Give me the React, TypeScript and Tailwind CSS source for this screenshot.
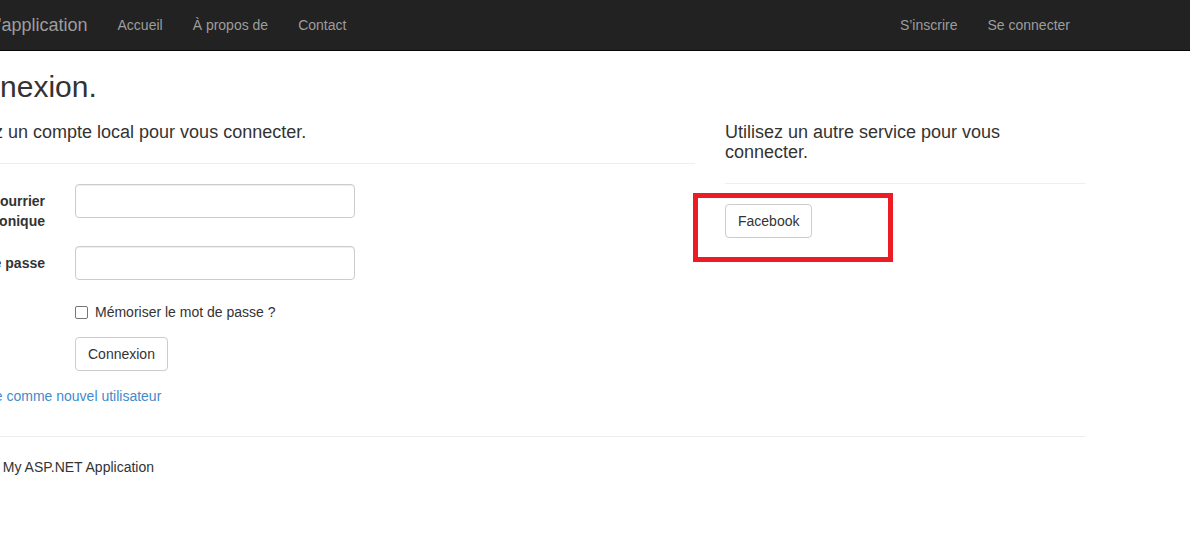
import React from "react";

function Hr() {
  return <hr className="my-[20px] border-0 border-t border-[#eeeeee]" />;
}

function Btn({ children }: { children: React.ReactNode }) {
  return (
    <button
      type="button"
      className="inline-block rounded-[4px] border border-[#cccccc] bg-white px-[12px] py-[6px] text-[14px] leading-[20px] text-[#333333]"
    >
      {children}
    </button>
  );
}

function Input() {
  return (
    <input
      className="block h-[34px] w-[280px] rounded-[4px] border border-[#cccccc] bg-white px-[12px] py-[6px] text-[14px] shadow-[inset_0_1px_1px_rgba(0,0,0,0.075)] outline-none"
    />
  );
}

export default function App() {
  return (
    <div
      className="relative h-[560px] w-[1190px] overflow-hidden bg-white text-[14px] leading-[20px] text-[#333333]"
      style={{ fontFamily: '"Liberation Sans", Arial, Helvetica, sans-serif' }}
    >
      {/* Navbar */}
      <div className="box-border h-[51px] border-b border-[#080808] bg-[#222222]">
        <div className="ml-[-55px] flex w-[1140px] text-[#9d9d9d]">
          <a className="py-[15px] pr-[15px] text-[18px] leading-[20px]">Nom d'application</a>
          <ul className="flex">
            <li className="px-[15px] py-[15px]">Accueil</li>
            <li className="px-[15px] py-[15px]">À propos de</li>
            <li className="px-[15px] py-[15px]">Contact</li>
          </ul>
          <ul className="ml-auto flex">
            <li className="px-[15px] py-[15px]">S’inscrire</li>
            <li className="px-[15px] py-[15px]">Se connecter</li>
          </ul>
        </div>
      </div>

      {/* Body */}
      <div className="ml-[-55px] w-[1140px]">
        <h2 className="mb-[10px] mt-[19px] text-[30px] font-normal leading-[33px]">Connexion.</h2>
        <div className="mx-[-15px] flex">
          <div className="w-[780px] px-[15px]">
            <section>
              <h4 className="my-[10px] text-[18px] font-normal leading-[19.8px]">
                Utilisez un compte local pour vous connecter.
              </h4>
              <Hr />
              <div className="mx-[-15px] mb-[15px] flex">
                <label className="w-[130px] px-[15px] pt-[7px] text-right font-bold">Courrier électronique</label>
                <div className="flex-1 px-[15px]">
                  <Input />
                </div>
              </div>
              <div className="mx-[-15px] mb-[15px] flex">
                <label className="w-[130px] px-[15px] pt-[7px] text-right font-bold">Mot de passe</label>
                <div className="flex-1 px-[15px]">
                  <Input />
                </div>
              </div>
              <div className="mx-[-15px] mb-[15px] flex">
                <div className="ml-[130px] min-h-[27px] flex-1 px-[15px] pt-[7px]">
                  <label className="flex items-start">
                    <span className="mt-[4px] box-border block h-[13px] w-[13px] rounded-[2px] border border-[#767676] bg-white" />
                    <span className="ml-[7px]">Mémoriser le mot de passe ?</span>
                  </label>
                </div>
              </div>
              <div className="mx-[-15px] mb-[15px] flex">
                <div className="ml-[130px] flex-1 px-[15px]">
                  <Btn>Connexion</Btn>
                </div>
              </div>
              <p className="mb-[10px]">
                <a className="text-[#428bca]">S’inscrire comme nouvel utilisateur</a>
              </p>
            </section>
          </div>
          <div className="w-[390px] px-[15px]">
            <section>
              <h4 className="my-[10px] text-[18px] font-normal leading-[19.8px]">
                Utilisez un autre service pour vous connecter.
              </h4>
              <Hr />
              <p className="mb-[10px]">
                <Btn>Facebook</Btn>
              </p>
            </section>
          </div>
        </div>
        <Hr />
        <footer>
          <p className="mb-[10px]">© 2015 - My ASP.NET Application</p>
        </footer>
      </div>

      {/* Red annotation */}
      <div className="absolute left-[693px] top-[193px] box-border h-[69px] w-[200px] border-[5px] border-[#ed1c24]" />
    </div>
  );
}
